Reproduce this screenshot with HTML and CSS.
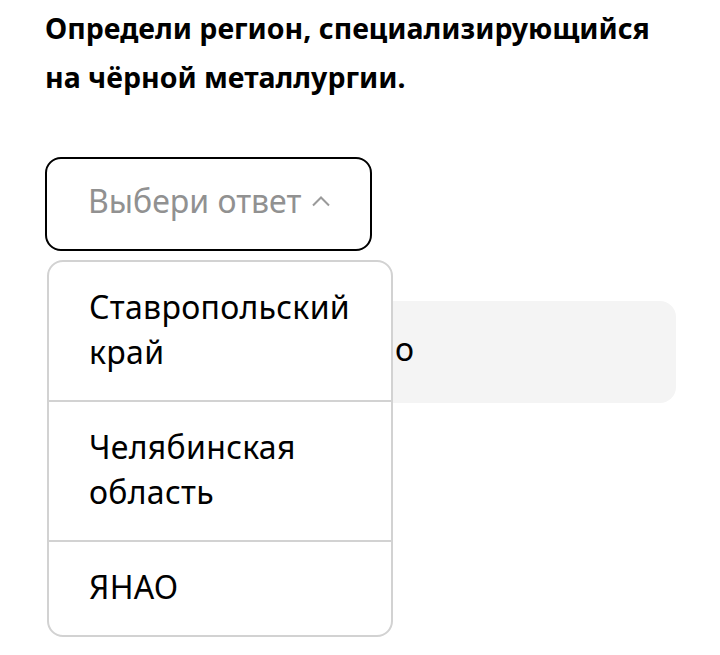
FILE: index.html
```html
<!DOCTYPE html>
<html lang="ru">
<head>
<meta charset="utf-8">
<link rel="stylesheet" href="styles.css">
</head>
<body>
<main class="page">
  <h1 class="question">Определи регион, специализирующийся на чёрной металлургии.</h1>
  <div class="answer-area">
    <button class="select" type="button">
      <span class="select-label">Выбери ответ</span>
      <svg class="chevron" width="20" height="12" viewBox="0 0 20 12"><path d="M2 10.5 L10 2.5 L18 10.5" fill="none" stroke="#9a9a9a" stroke-width="2"/></svg>
    </button>
    <div class="field"><span class="field-text">о</span></div>
    <ul class="menu">
      <li class="menu-item">Ставропольский край</li>
      <li class="menu-item">Челябинская область</li>
      <li class="menu-item">ЯНАО</li>
    </ul>
  </div>
</main>
</body>
</html>
```

FILE: styles.css
```css
html, body {
  margin: 0;
  padding: 0;
  background: #ffffff;
}
body {
  font-family: "Noto Sans", "Open Sans", sans-serif;
  color: #000;
}
.page {
  box-sizing: border-box;
  min-height: 655px;
  padding: 4px 44px 0 45px;
}
.question {
  margin: 0;
  font-size: 28.5px;
  font-weight: 700;
  line-height: 49px;
  width: 620px;
  letter-spacing: 0;
}
.answer-area {
  position: relative;
  margin-top: 55px;
}
.select {
  display: flex;
  align-items: center;
  gap: 10px;
  box-sizing: border-box;
  width: 327px;
  height: 94px;
  padding: 0 0 8px 41px;
  border: 2px solid #000;
  border-radius: 16px;
  background: #fff;
  font: inherit;
  font-size: 32px;
  color: #919191;
  letter-spacing: 0;
}
.chevron {
  margin-top: 2px;
}
.field {
  margin-top: 50px;
  margin-left: 3px;
  width: 628px;
  height: 102px;
  border-radius: 16px;
  background: #f4f4f4;
  display: flex;
  align-items: center;
  box-sizing: border-box;
  padding: 0 0 8px 347px;
  font-size: 32px;
}
.menu {
  position: absolute;
  left: 2px;
  top: 103px;
  width: 346px;
  box-sizing: border-box;
  margin: 0;
  padding: 0;
  list-style: none;
  background: #fff;
  border: 2px solid #d2d2d2;
  border-radius: 16px;
  overflow: hidden;
}
.menu-item {
  padding: 22px 20px 26px 40px;
  font-size: 32px;
  line-height: 45px;
  letter-spacing: 0.3px;
}
.menu-item + .menu-item {
  border-top: 2px solid #d2d2d2;
}
```
